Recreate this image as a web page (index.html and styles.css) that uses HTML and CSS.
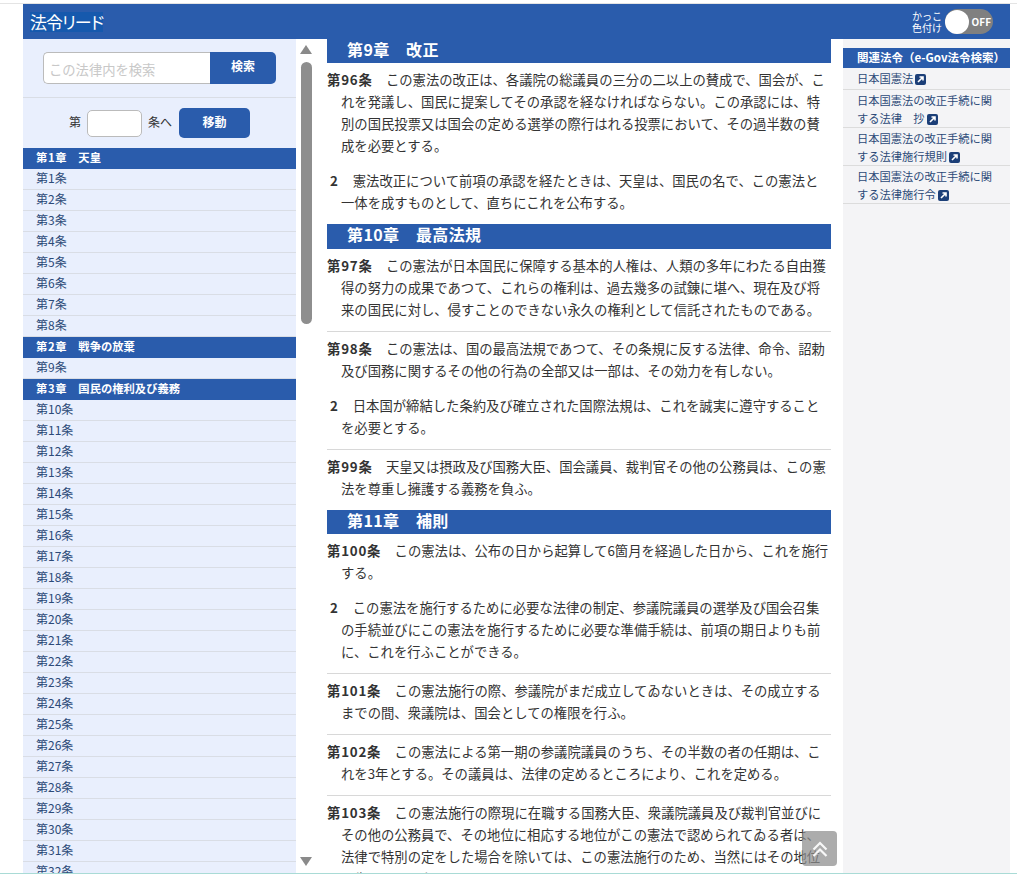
FILE: index.html
```html
<!DOCTYPE html>
<html lang="ja">
<head>
<meta charset="utf-8">
<title>法令リード</title>
<link rel="stylesheet" href="styles.css">
</head>
<body>
<div class="page">
  <header class="topbar">
    <span class="logo">法令リード</span>
    <div class="toggle-wrap">
      <span class="toggle-label">かっこ<br>色付け</span>
      <span class="toggle"><span class="knob"></span><span class="off">OFF</span></span>
    </div>
  </header>
  <div class="columns">
    <aside class="nav">
      <div class="search-row">
        <input class="search-input" type="text" placeholder="この法律内を検索">
        <button class="search-btn">検索</button>
      </div>
      <div class="jump-row">
        <span class="jump-text">第</span>
        <input class="jump-input" type="text">
        <span class="jump-text">条へ</span>
        <button class="jump-btn">移動</button>
      </div>
      <ul class="toc">
        <li class="ch"><span class="ch-no">第1章</span>　天皇</li>
        <li>第1条</li><li>第2条</li><li>第3条</li><li>第4条</li><li>第5条</li><li>第6条</li><li>第7条</li><li>第8条</li>
        <li class="ch"><span class="ch-no">第2章</span>　戦争の放棄</li>
        <li>第9条</li>
        <li class="ch"><span class="ch-no">第3章</span>　国民の権利及び義務</li>
        <li>第10条</li><li>第11条</li><li>第12条</li><li>第13条</li><li>第14条</li><li>第15条</li><li>第16条</li><li>第17条</li><li>第18条</li><li>第19条</li><li>第20条</li><li>第21条</li><li>第22条</li><li>第23条</li><li>第24条</li><li>第25条</li><li>第26条</li><li>第27条</li><li>第28条</li><li>第29条</li><li>第30条</li><li>第31条</li><li>第32条</li>
      </ul>
    </aside>
    <div class="scrollbar">
      <svg class="arrow" width="12" height="9" viewBox="0 0 12 9"><path d="M6 0 12 9H0Z" fill="#8a8a8a"/></svg>
      <div class="thumb"></div>
      <svg class="arrow arrow-down" width="12" height="9" viewBox="0 0 12 9"><path d="M0 0H12L6 9Z" fill="#8a8a8a"/></svg>
    </div>
    <main class="law">
      <h2 class="chapter">第9章　改正</h2>
      <article class="art">
        <p><b>第96条</b>　この憲法の改正は、各議院の総議員の三分の二以上の賛成で、国会が、これを発議し、国民に提案してその承認を経なければならない。この承認には、特別の国民投票又は国会の定める選挙の際行はれる投票において、その過半数の賛成を必要とする。</p>
        <p><b class="num">2</b>　憲法改正について前項の承認を経たときは、天皇は、国民の名で、この憲法と一体を成すものとして、直ちにこれを公布する。</p>
      </article>
      <h2 class="chapter chapter-tall">第10章　最高法規</h2>
      <article class="art ruled">
        <p><b>第97条</b>　この憲法が日本国民に保障する基本的人権は、人類の多年にわたる自由獲得の努力の成果であつて、これらの権利は、過去幾多の試錬に堪へ、現在及び将来の国民に対し、侵すことのできない永久の権利として信託されたものである。</p>
      </article>
      <article class="art ruled">
        <p><b>第98条</b>　この憲法は、国の最高法規であつて、その条規に反する法律、命令、詔勅及び国務に関するその他の行為の全部又は一部は、その効力を有しない。</p>
        <p><b class="num">2</b>　日本国が締結した条約及び確立された国際法規は、これを誠実に遵守することを必要とする。</p>
      </article>
      <article class="art">
        <p><b>第99条</b>　天皇又は摂政及び国務大臣、国会議員、裁判官その他の公務員は、この憲法を尊重し擁護する義務を負ふ。</p>
      </article>
      <h2 class="chapter">第11章　補則</h2>
      <article class="art ruled">
        <p><b>第100条</b>　この憲法は、公布の日から起算して6箇月を経過した日から、これを施行する。</p>
        <p><b class="num">2</b>　この憲法を施行するために必要な法律の制定、参議院議員の選挙及び国会召集の手続並びにこの憲法を施行するために必要な準備手続は、前項の期日よりも前に、これを行ふことができる。</p>
      </article>
      <article class="art ruled">
        <p><b>第101条</b>　この憲法施行の際、参議院がまだ成立してゐないときは、その成立するまでの間、衆議院は、国会としての権限を行ふ。</p>
      </article>
      <article class="art ruled">
        <p><b>第102条</b>　この憲法による第一期の参議院議員のうち、その半数の者の任期は、これを3年とする。その議員は、法律の定めるところにより、これを定める。</p>
      </article>
      <article class="art">
        <p><b>第103条</b>　この憲法施行の際現に在職する国務大臣、衆議院議員及び裁判官並びにその他の公務員で、その地位に相応する地位がこの憲法で認められてゐる者は、法律で特別の定をした場合を除いては、この憲法施行のため、当然にはその地位を失ふことはない。</p>
      </article>
    </main>
    <aside class="related">
      <h3 class="rel-head">関連法令（e-Gov法令検索）</h3>
      <ul class="rel-list">
        <li>日本国憲法<svg class="ext" width="11" height="11" viewBox="0 0 11 11"><rect width="11" height="11" rx="2" fill="#1c3f78"/><path d="M3 8 7.5 3.5M4.5 3H8v3.5" fill="none" stroke="#fff" stroke-width="1.6"/></svg></li>
        <li>日本国憲法の改正手続に関する法律　抄<svg class="ext" width="11" height="11" viewBox="0 0 11 11"><rect width="11" height="11" rx="2" fill="#1c3f78"/><path d="M3 8 7.5 3.5M4.5 3H8v3.5" fill="none" stroke="#fff" stroke-width="1.6"/></svg></li>
        <li>日本国憲法の改正手続に関する法律施行規則<svg class="ext" width="11" height="11" viewBox="0 0 11 11"><rect width="11" height="11" rx="2" fill="#1c3f78"/><path d="M3 8 7.5 3.5M4.5 3H8v3.5" fill="none" stroke="#fff" stroke-width="1.6"/></svg></li>
        <li>日本国憲法の改正手続に関する法律施行令<svg class="ext" width="11" height="11" viewBox="0 0 11 11"><rect width="11" height="11" rx="2" fill="#1c3f78"/><path d="M3 8 7.5 3.5M4.5 3H8v3.5" fill="none" stroke="#fff" stroke-width="1.6"/></svg></li>
      </ul>
    </aside>
  </div>
  <a class="to-top"><svg width="18" height="18" viewBox="0 0 18 18"><path d="M2.5 9.5 9 3l6.5 6.5M2.5 16 9 9.5l6.5 6.5" fill="none" stroke="#fff" stroke-width="2.2" opacity=".9"/></svg></a>
</div>
</body>
</html>
```
FILE: styles.css
```css
* { box-sizing: border-box; }
html, body { margin: 0; padding: 0; height: 875px; overflow: hidden; background: #fff; }
body { font-family: "Noto Sans CJK JP", "Noto Sans", sans-serif; color: #333; }
.page { position: relative; height: 873px; margin: 0 7px 0 23px; padding-top: 4px; display: flex; flex-direction: column; }
body::before { content: ""; position: absolute; left: 0; right: 0; top: 3px; height: 1px; background: #e4e4e4; }
body::after { content: ""; position: absolute; left: 0; right: 0; top: 873px; height: 1px; background: #a9dbd6; }
.topbar { height: 35px; flex: none; background: #2a5cac; display: flex; align-items: center; justify-content: space-between; padding: 0 17px 0 7px; color: #fff; }
.logo { font-size: 17px; line-height: 20px; background: #1659ad; font-feature-settings: "palt"; letter-spacing: -1px; }
.toggle-wrap { display: flex; align-items: center; gap: 3px; }
.toggle-label { font-size: 10px; line-height: 12px; }
.toggle { width: 48px; height: 25px; border-radius: 13px; background: #808080; position: relative; display: flex; align-items: center; justify-content: flex-end; padding-right: 2px; }
.knob { position: absolute; left: 0; top: .5px; width: 24px; height: 24px; border-radius: 50%; background: #fff; }
.off { font-size: 10px; font-weight: 700; }
.columns { flex: 1; min-height: 0; display: flex; overflow: hidden; }
.nav { width: 273px; flex: none; background: #e9effd; overflow: hidden; }
.search-row { height: 59px; padding: 13px 20px 0; display: flex; align-items: flex-start; border-bottom: 1px solid #d9dde5; }
.search-input { width: 167px; height: 32px; border: 1px solid #bbb; border-right: 0; border-radius: 5px 0 0 5px; padding: 2px 5px 0; font: 13.3px "Noto Sans CJK JP", sans-serif; background: #fff; outline: 0; }
.search-input::placeholder { color: #c8c8c8; }
.search-btn, .jump-btn { border: 0; background: #2a5cac; color: #fff; font: 700 12px "Noto Sans CJK JP", sans-serif; padding: 0; }
.search-btn { width: 66px; height: 32px; border-radius: 0 5px 5px 0; padding-bottom: 5px; }
.jump-row { display: flex; align-items: center; font-size: 12px; height: 50px; padding-left: 46px; }
.jump-text { padding-bottom: 3px; }
.jump-input { width: 55px; height: 27px; margin: 0 6px; border: 1px solid #bbb; border-radius: 5px; background: #fff; outline: 0; }
.jump-btn { width: 71px; height: 30px; margin-left: 7px; border-radius: 5px; padding-bottom: 3px; }
.toc { list-style: none; margin: 0; padding: 0; }
.toc li { height: 21px; line-height: 18px; font-size: 12px; padding-left: 13px; border-bottom: 1px solid #d9dde5; color: #2c4a78; }
.toc li.ch { line-height: 18px; background: #2a5cac; color: #fff; font-weight: 700; font-size: 11.3px; border: 0; }
.ch-no { letter-spacing: .6px; }
.scrollbar { width: 31px; flex: none; padding: 6px 0 0 4px; display: flex; flex-direction: column; height: 834px; }
.arrow { display: block; flex: none; }
.thumb { width: 11px; height: 262px; margin: 8px 0 0 .5px; border-radius: 6px; background: #8e8e8e; flex: none; }
.arrow-down { margin-top: auto; margin-bottom: 7px; }
.law { width: 504px; flex: none; overflow: hidden; font-size: 13.33px; line-height: 22px; }
.chapter { margin: 0; height: 24px; line-height: 20px; padding-left: 20px; background: #2a5cac; color: #fff; font-size: 16px; letter-spacing: .4px; font-weight: 700; }
.chapter-tall { height: 25px; }
.art { padding: 6px 0 10px; }
.art.ruled { border-bottom: 1px solid #d8d8d8; }
.art p { margin: 0 0 13px; padding-left: 14px; text-indent: -14px; }
.art p:last-child { margin-bottom: 0; }
.art b { letter-spacing: .8px; }
.art .num { padding-left: 3px; letter-spacing: 1.6px; }
.related { width: 167px; flex: none; margin-left: 12px; background: #f4f4f6; padding-top: 9px; }
.rel-head { margin: 0; height: 20px; line-height: 19px; background: #2a5cac; color: #fff; font-size: 11.5px; font-weight: 700; padding-left: 14px; white-space: nowrap; }
.rel-list { list-style: none; margin: 0; padding: 0; }
.rel-list li { padding: 1px 14px 0; font-size: 11.25px; line-height: 18px; color: #2c4a78; border-bottom: 1px solid #dcdcdc; }
.rel-list li:first-child { padding-bottom: 2px; }
.ext { vertical-align: -1.5px; margin-left: 2px; }
.to-top { position: absolute; left: 779px; top: 831px; width: 35px; height: 35px; border-radius: 4px; background: rgba(140,140,140,.72); display: flex; align-items: center; justify-content: center; }
```
